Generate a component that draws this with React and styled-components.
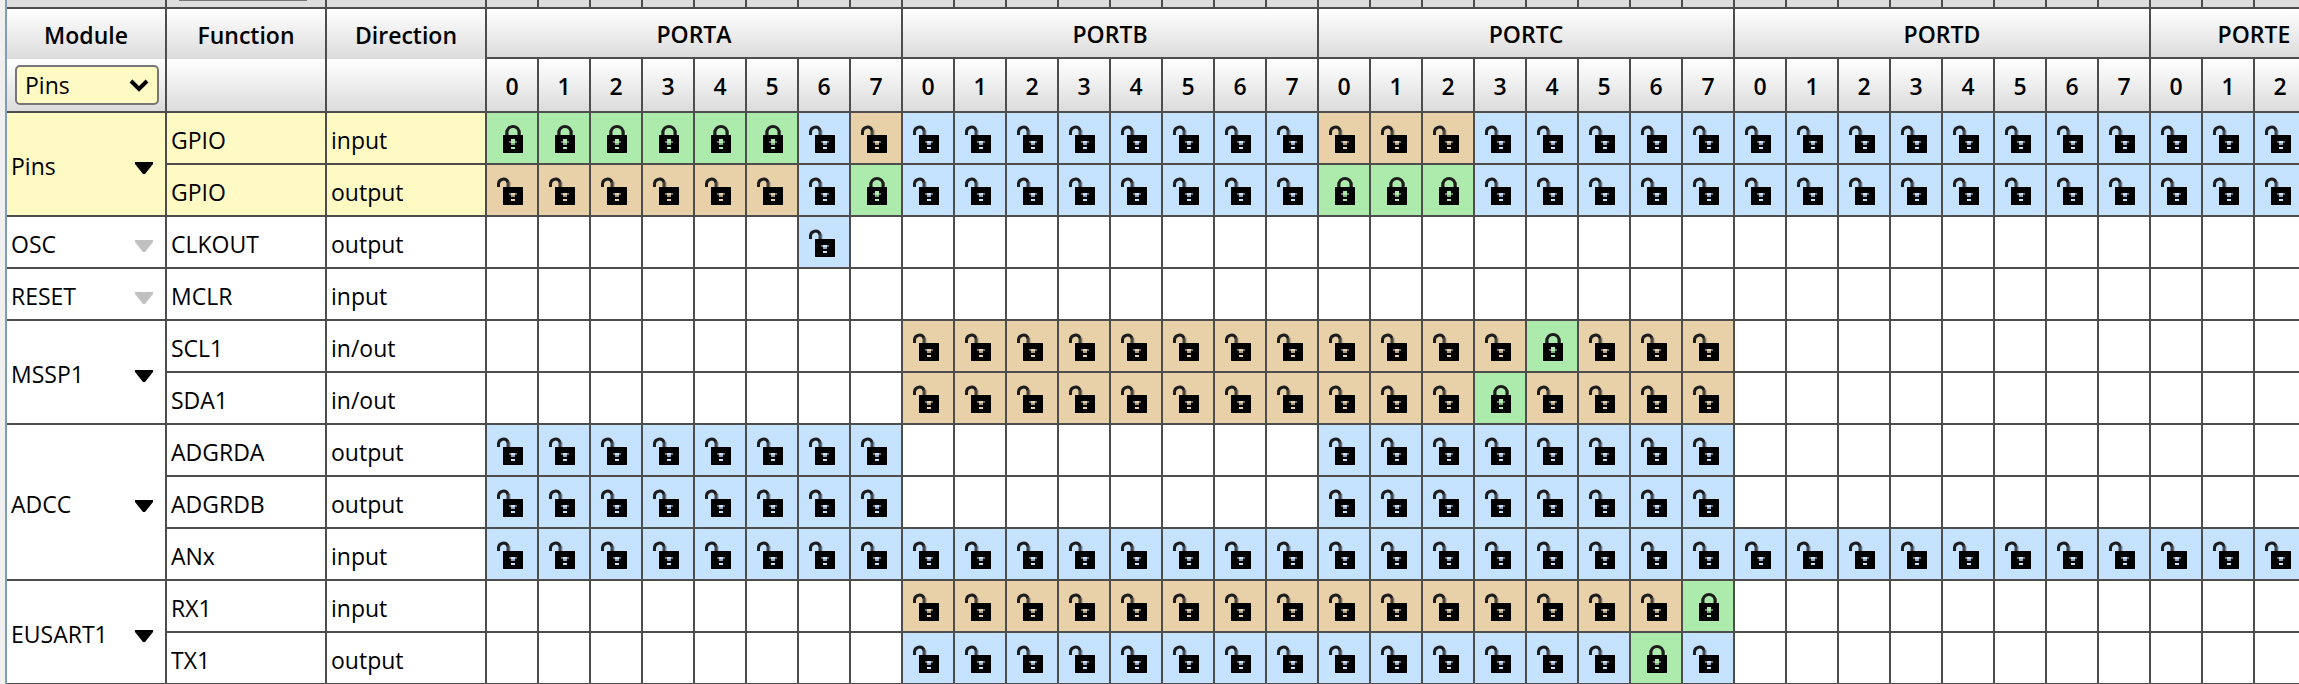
import React, { useState } from "react";
import styled, { createGlobalStyle } from "styled-components";

const GlobalStyle = createGlobalStyle`
  body {
    margin: 0;
    background: #fff;
    color: #000;
    font-family: "Open Sans", "Noto Sans", sans-serif;
    font-size: 23px;
  }
`;

const LINE = "#4d4d4d";
const FILLS = {
  locked: "#adebad",
  shared: "#e8d1a9",
  open: "#c5e2ff",
};

const Panel = styled.main`
  height: 100vh;
  overflow: hidden;
  border-left: 5px solid #f0f0f0;
`;

const Grid = styled.table`
  table-layout: fixed;
  width: 2354px;
  border-collapse: separate;
  border-spacing: 0;
  border-left: 2px solid #7f9db9;
`;

const LabelCol = styled.col`
  width: 160px;
`;

const PinCol = styled.col`
  width: 52px;
`;

const Cell = styled.td`
  box-sizing: border-box;
  padding: 0;
  border: 0 solid ${LINE};
  border-right-width: 2px;
  border-bottom-width: 2px;
`;

const HeadCell = styled(Cell)`
  height: ${(p) => p.$height}px;
  padding-top: 2px;
  background: linear-gradient(#fff, #dcdcdc);
  font-weight: 600;
  line-height: 32px;
  text-align: center;
  border-bottom-width: ${(p) => (p.$joined ? 0 : 2)}px;
`;

const FilterCell = styled(HeadCell)`
  padding-top: 0;
`;

const TopCell = styled(Cell)`
  height: 9px;
  background: #dedede;
`;

const FilterEdge = styled.div`
  height: 1px;
  margin: 0 18px 6px 12px;
  background: #767676;
`;

const FilterBox = styled.div`
  position: relative;
  width: 144px;
  height: 40px;
  margin-left: 8px;
`;

const ModuleFilter = styled.select`
  appearance: none;
  box-sizing: border-box;
  width: 100%;
  height: 100%;
  padding: 0 8px;
  border: 2px solid #767676;
  border-radius: 5px;
  background: #fff9c4;
  color: #000;
  font: inherit;
  font-weight: 400;
  line-height: 32px;
`;

const Chevron = styled.svg`
  position: absolute;
  top: 14px;
  right: 10px;
  width: 20px;
  height: 14px;
  pointer-events: none;
`;

const TextCell = styled(Cell)`
  height: 52px;
  padding: 4px 4px 0;
  line-height: 32px;
  background: ${(p) => (p.$active ? "#fff9c4" : "#fff")};
`;

const ModuleRow = styled.div`
  display: flex;
  align-items: center;
  justify-content: space-between;
`;

const MenuButton = styled.button`
  display: flex;
  padding: 4px 0 0;
  margin-right: 8px;
  border: 0;
  background: none;
  color: ${(p) => (p.disabled ? "#c0c0c0" : "#000")};
`;

const PinCell = styled(Cell)`
  height: 52px;
  background: ${(p) => FILLS[p.$state] || "#fff"};
`;

const PinButton = styled.button`
  display: flex;
  padding: 2px 0 0 9px;
  border: 0;
  background: none;
  color: #000;
`;

function LockIcon({ closed }) {
  return (
    <svg width="28" height="28" viewBox="0 0 28 28" aria-hidden="true">
      {closed ? (
        <g fill="none" stroke="#1c1c1c" strokeWidth="3">
          <path d="M11 10V7a6 5.5 0 0 1 12 0v3" />
          <path d="M9.5 10V5M24.5 10V5" strokeWidth="1" opacity="0.5" />
        </g>
      ) : (
        <g fill="none" stroke="#1c1c1c" strokeWidth="3">
          <path d="M2.5 10V6.500a5 5 0 0 1 9.500-1.500" />
          <path d="M12 4.500V10" opacity="0.8" />
          <path d="M14 5V10" strokeWidth="1" opacity="0.4" />
        </g>
      )}
      <path
        fillRule="evenodd"
        d={
          closed
            ? "M7 10H27V28H7ZM15 14V20H19V14ZM15 22V24H19V22Z"
            : "M7 10H27V28H7ZM15 16V20H19V16ZM15 22V24H19V22Z"
        }
        fill="#000"
      />
      <path d="M13 16H15V18H13ZM19 16H21V18H19Z" fill="#8c8c8c" opacity="0.8" />
      <path d="M15 18H19V20H15Z" fill="#000" opacity="0.25" />
    </svg>
  );
}

const PORTS = [
  ["PORTA", 8],
  ["PORTB", 8],
  ["PORTC", 8],
  ["PORTD", 8],
  ["PORTE", 4],
];
const PIN_NUMBERS = PORTS.flatMap(([port, count]) =>
  Array.from({ length: count }, (_, n) => ({ id: port + n, label: n, port }))
);

// One letter per pin: L = locked, s = shared, o = open, . = not available
const STATES = { L: "locked", s: "shared", o: "open" };
const MODULES = [
  {
    name: "Pins",
    active: true,
    rows: [
      ["GPIO", "input", "LLLLLLos" + "oooooooo" + "sssooooo" + "oooooooo" + "oooo"],
      ["GPIO", "output", "ssssssoL" + "oooooooo" + "LLLooooo" + "oooooooo" + "oooo"],
    ],
  },
  { name: "OSC", disabled: true, rows: [["CLKOUT", "output", "......o."]] },
  { name: "RESET", disabled: true, rows: [["MCLR", "input", ""]] },
  {
    name: "MSSP1",
    rows: [
      ["SCL1", "in/out", "........" + "ssssssss" + "ssssLsss"],
      ["SDA1", "in/out", "........" + "ssssssss" + "sssLssss"],
    ],
  },
  {
    name: "ADCC",
    rows: [
      ["ADGRDA", "output", "oooooooo" + "........" + "oooooooo"],
      ["ADGRDB", "output", "oooooooo" + "........" + "oooooooo"],
      ["ANx", "input", "oooooooo" + "oooooooo" + "oooooooo" + "oooooooo" + "oooo"],
    ],
  },
  {
    name: "EUSART1",
    rows: [
      ["RX1", "input", "........" + "ssssssss" + "sssssssL"],
      ["TX1", "output", "........" + "oooooooo" + "ooooooLo"],
    ],
  },
];

function PinRow({ module, row, first }) {
  const [fn, direction, pins] = row;
  return (
    <tr>
      {first && (
        <TextCell rowSpan={module.rows.length} $active={module.active}>
          <ModuleRow>
            {module.name}
            <MenuButton aria-label={`${module.name} menu`} disabled={module.disabled}>
              <svg width="18" height="12" viewBox="0 0 18 12" aria-hidden="true">
                <path d="M0 0H18V2L10 12H8L0 2Z" fill="currentColor" />
              </svg>
            </MenuButton>
          </ModuleRow>
        </TextCell>
      )}
      <TextCell $active={module.active}>{fn}</TextCell>
      <TextCell $active={module.active}>{direction}</TextCell>
      {PIN_NUMBERS.map((pin, i) => {
        const state = STATES[pins[i]];
        return (
          <PinCell key={pin.id} $state={state}>
            {state && (
              <PinButton aria-label={`${fn} ${direction} ${pin.port} ${pin.label}`}>
                <LockIcon closed={state === "locked"} />
              </PinButton>
            )}
          </PinCell>
        );
      })}
    </tr>
  );
}

export default function App() {
  const [filter, setFilter] = useState("Pins");
  return (
    <Panel>
      <GlobalStyle />
      <Grid>
        <colgroup>
          <LabelCol />
          <LabelCol />
          <LabelCol />
          {PIN_NUMBERS.map((pin) => (
            <PinCol key={pin.id} />
          ))}
        </colgroup>
        <thead>
          <tr>
            <TopCell />
            <TopCell>
              <FilterEdge />
            </TopCell>
            <TopCell />
            {PIN_NUMBERS.map((pin) => (
              <TopCell key={pin.id} />
            ))}
          </tr>
          <tr>
            {["Module", "Function", "Direction"].map((title) => (
              <HeadCell as="th" key={title} $height={50} $joined>
                {title}
              </HeadCell>
            ))}
            {PORTS.map(([port, count]) => (
              <HeadCell as="th" key={port} colSpan={count} $height={50}>
                {port}
              </HeadCell>
            ))}
          </tr>
          <tr>
            <FilterCell $height={54}>
              <FilterBox>
                <ModuleFilter
                  aria-label="Module"
                  value={filter}
                  onChange={(e) => setFilter(e.target.value)}
                >
                  {MODULES.map((m) => (
                    <option key={m.name}>{m.name}</option>
                  ))}
                </ModuleFilter>
                <Chevron viewBox="0 0 20 14" aria-hidden="true">
                  <path d="M2 2L10 10L18 2" fill="none" stroke="#000" strokeWidth="4" />
                </Chevron>
              </FilterBox>
            </FilterCell>
            <FilterCell $height={54} />
            <FilterCell $height={54} />
            {PIN_NUMBERS.map((pin) => (
              <HeadCell as="th" key={pin.id} $height={54}>
                {pin.label}
              </HeadCell>
            ))}
          </tr>
        </thead>
        <tbody>
          {MODULES.map((module) =>
            module.rows.map((row, i) => (
              <PinRow key={module.name + i} module={module} row={row} first={i === 0} />
            ))
          )}
        </tbody>
      </Grid>
    </Panel>
  );
}
